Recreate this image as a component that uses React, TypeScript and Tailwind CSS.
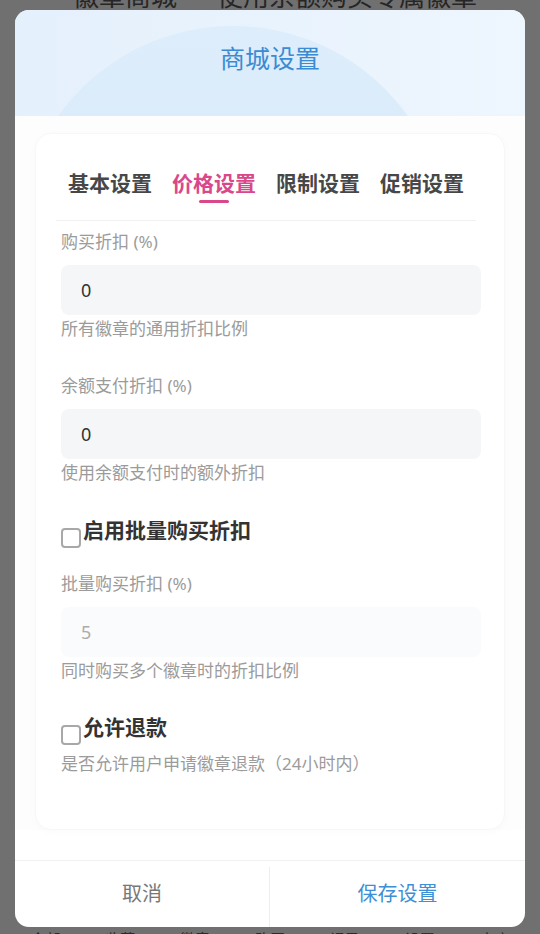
import { useState } from 'react';

const tabs = ['基本设置', '价格设置', '限制设置', '促销设置'];
const navItems = ['全部', '收藏', '徽章', '购买', '记录', '设置', '商店'];

type FieldProps = {
  label: string;
  value: string;
  help: string;
  disabled?: boolean;
};

function Field({ label, value, help, disabled }: FieldProps) {
  return (
    <div>
      <p className="h-6 text-[17px] leading-6 text-[#9b9b9b]">{label}</p>
      <div
        className={
          disabled
            ? 'mt-[11px] flex h-[50px] w-[420px] items-center rounded-lg bg-[#fafbfc] px-5 text-[18px] text-[#acacac]'
            : 'mt-[11px] flex h-[50px] w-[420px] items-center rounded-lg bg-[#f5f6f8] px-5 text-[18px] text-[#333]'
        }
      >
        {value}
      </div>
      <p className="mt-[2px] h-6 text-[17px] leading-6 text-[#9b9b9b]">{help}</p>
    </div>
  );
}

function CheckRow({ label, checked, onToggle }: { label: string; checked: boolean; onToggle: () => void }) {
  return (
    <div className="flex h-6 items-start" onClick={onToggle}>
      <span
        className={
          checked
            ? 'mt-[10px] h-5 w-5 shrink-0 rounded-[4px] border-2 border-[#3d8fd6] bg-[#3d8fd6]'
            : 'mt-[10px] h-5 w-5 shrink-0 rounded-[4px] border-2 border-[#a8a8a8] bg-white'
        }
      />
      <span className="ml-[2px] text-[21px] leading-6 font-bold text-[#333]">{label}</span>
    </div>
  );
}

export default function App() {
  const [active, setActive] = useState(1);
  const [bulk, setBulk] = useState(false);
  const [refund, setRefund] = useState(false);

  return (
    <div className="relative h-[934px] w-full overflow-hidden bg-[#707070] font-['Noto_Sans','Noto_Sans_CJK_SC',sans-serif]">
      {/* page behind the overlay */}
      <div className="flex h-full flex-col justify-between">
        <div className="-mt-[19px] flex justify-center gap-10 pl-[10px] text-[26px] leading-[30px] text-[#262626]">
          <span>徽章商城</span>
          <span>使用余额购买专属徽章</span>
        </div>
        <div className="flex h-[8px] justify-around overflow-hidden px-2 pt-[3px] text-[15px] leading-5 text-[#2a2a2a]">
          {navItems.map((n) => (
            <span key={n}>{n}</span>
          ))}
        </div>
      </div>

      {/* dialog */}
      <div className="absolute left-[15px] top-[10px] flex h-[917px] w-[510px] flex-col overflow-hidden rounded-[14px] bg-white">
        <div className="relative h-[106px] shrink-0 overflow-hidden bg-gradient-to-r from-[#e4f0fc] to-[#eef6fe]">
          <div className="absolute left-[3px] top-[16px] h-[430px] w-[430px] rounded-full bg-gradient-to-b from-[#ddedfb] to-[#d2e6f9]" />
          <h2 className="relative pt-[33px] text-center text-[25px] leading-[30px] text-[#3b8bd2]">商城设置</h2>
        </div>

        <div className="flex-1 bg-[#fdfdfe] px-5 pt-[17px]">
          <div className="h-[697px] rounded-2xl border border-[#f6f7f9] bg-white pl-5 pt-[35px] shadow-[0_2px_10px_rgba(0,0,0,0.02)]">
            <div className="flex w-[420px] justify-center gap-5">
              {tabs.map((t, i) => (
                <button key={t} className="flex flex-col items-center" onClick={() => setActive(i)}>
                  <span
                    className={
                      i === active
                        ? 'text-[21px] leading-7 font-bold text-[#d9488b]'
                        : 'text-[21px] leading-7 font-bold text-[#474747]'
                    }
                  >
                    {t}
                  </span>
                  <span className={i === active ? 'mt-[3px] h-[3px] w-[30px] rounded-full bg-[#d9488b]' : 'mt-[3px] h-[3px] w-[30px]'} />
                </button>
              ))}
            </div>
            <div className="mt-[17px] h-px w-[420px] bg-[#f0f1f3]" />

            <div className="pl-[5px] pt-[9px]">
              <Field label="购买折扣 (%)" value="0" help="所有徽章的通用折扣比例" />
              <div className="mt-[33px]">
                <Field label="余额支付折扣 (%)" value="0" help="使用余额支付时的额外折扣" />
              </div>
              <div className="mt-[33px]">
                <CheckRow label="启用批量购买折扣" checked={bulk} onToggle={() => setBulk(!bulk)} />
              </div>
              <div className="mt-[30px]">
                <Field label="批量购买折扣 (%)" value="5" help="同时购买多个徽章时的折扣比例" disabled />
              </div>
              <div className="mt-[32px]">
                <CheckRow label="允许退款" checked={refund} onToggle={() => setRefund(!refund)} />
              </div>
              <p className="mt-[13px] h-6 text-[17px] leading-6 text-[#9b9b9b]">是否允许用户申请徽章退款（24小时内）</p>
            </div>
          </div>
        </div>

        <div className="mt-[30px] grid h-[67px] shrink-0 grid-cols-2 border-t border-[#f0f1f3]">
          <button className="mt-[6px] border-r border-[#eeeeee] pb-[6px] text-[20px] text-[#777]">取消</button>
          <button className="pb-0 text-[20px] text-[#3d8fd6]">保存设置</button>
        </div>
      </div>
    </div>
  );
}
